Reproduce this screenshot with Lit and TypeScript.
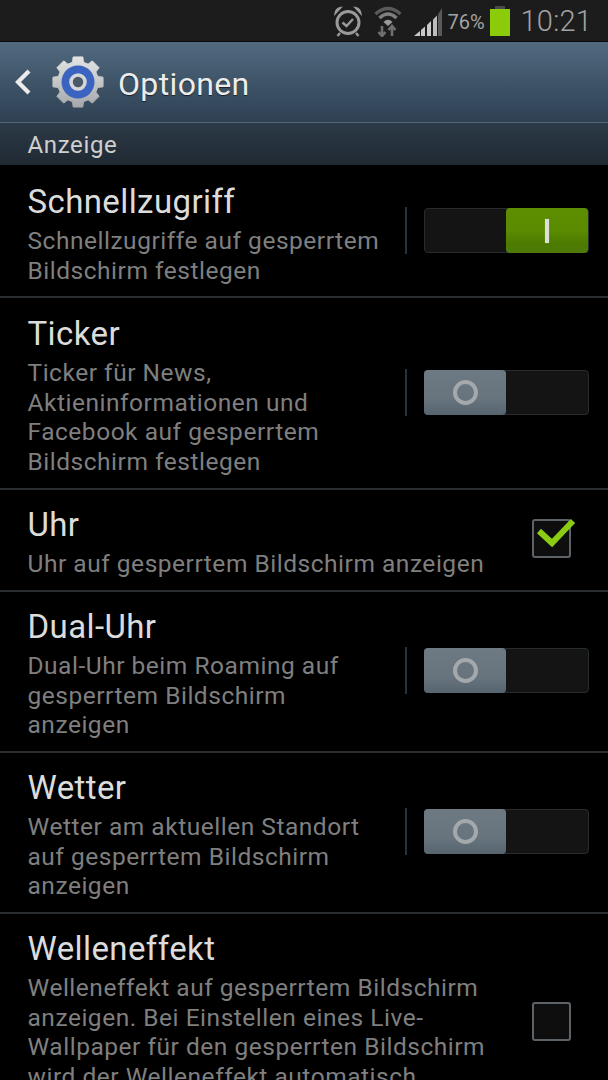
import { LitElement, html, css, svg } from "lit";
import { customElement } from "lit/decorators.js";

type Row = { title: string; lines: string[]; ctl: "on" | "off" | "checked" | "unchecked"; height: number; top: number; lift: number };

const rows: Row[] = [
  { title: "Schnellzugriff", lines: ["Schnellzugriffe auf gesperrtem", "Bildschirm festlegen"], ctl: "on", height: 133, top: 17, lift: 0 },
  { title: "Ticker", lines: ["Ticker für News,", "Aktieninformationen und", "Facebook auf gesperrtem", "Bildschirm festlegen"], ctl: "off", height: 192, top: 16, lift: 1 },
  { title: "Uhr", lines: ["Uhr auf gesperrtem Bildschirm anzeigen"], ctl: "checked", height: 102, top: 15, lift: 3 },
  { title: "Dual-Uhr", lines: ["Dual-Uhr beim Roaming auf", "gesperrtem Bildschirm", "anzeigen"], ctl: "off", height: 161, top: 15, lift: 3 },
  { title: "Wetter", lines: ["Wetter am aktuellen Standort", "auf gesperrtem Bildschirm", "anzeigen"], ctl: "off", height: 161, top: 15, lift: 3 },
  { title: "Welleneffekt", lines: ["Welleneffekt auf gesperrtem Bildschirm", "anzeigen. Bei Einstellen eines Live-", "Wallpaper für den gesperrten Bildschirm", "wird der Welleneffekt automatisch", "deaktiviert."], ctl: "unchecked", height: 220, top: 15, lift: 3 },
];

const gearPath = (() => {
  const teeth = 8, cx = 26, cy = 26, ro = 25.5, ri = 20.5;
  let d = "";
  for (let i = 0; i < teeth; i++) {
    const a = (i / teeth) * Math.PI * 2 - Math.PI / 2;
    const w = 0.19, g = 0.27;
    const pts: [number, number][] = [
      [ri, a - g], [ro, a - w], [ro, a + w], [ri, a + g],
    ];
    for (const [r, t] of pts) {
      d += `${d ? "L" : "M"}${(cx + r * Math.cos(t)).toFixed(2)} ${(cy + r * Math.sin(t)).toFixed(2)}`;
    }
  }
  return d + "Z";
})();

@customElement("app-root")
export class AppRoot extends LitElement {
  static styles = css`
    :host {
      display: block;
      width: 608px;
      height: 1080px;
      overflow: hidden;
      background: #000;
      font-family: Roboto, "Liberation Sans", sans-serif;
    }
    .status {
      height: 42px;
      background: #1c1c1c;
      display: flex;
      align-items: center;
      justify-content: flex-end;
      box-shadow: inset 0 -1px 0 #0c0c0c;
    }
    .status svg { display: block; flex: none; }
    .alarm { margin-right: 11px; }
    .wifi { margin-right: 12px; }
    .signal { margin-right: 6px; }
    .pct { font-size: 20px; color: #a3a3a3; width: 42px; white-space: nowrap; margin-top: 1px; }
    .batt { margin-right: 11px; }
    .clock { font-size: 29px; color: #a3a3a3; margin-right: 16px; font-weight: 300; letter-spacing: 0.2px; }
    .bar {
      height: 81px;
      box-sizing: border-box;
      background: linear-gradient(#516a80 0%, #3f5468 50%, #2f4153 100%);
      border-bottom: 1px solid #4d677c;
      display: flex;
      align-items: center;
    }
    .back { margin-left: 13px; flex: none; }
    .gear { margin-left: 19px; flex: none; }
    .bar-title {
      margin-left: 14px;
      font-size: 32px;
      color: #ececec;
      letter-spacing: 0.35px;
      text-shadow: 0 1px 1px rgba(0,0,0,.6);
      margin-top: 3px;
    }
    .section {
      height: 42px;
      box-sizing: border-box;
      padding-left: 27.5px;
      background: linear-gradient(#2c3a47, #1f2932);
      color: #cfcfcf;
      font-size: 24px;
      letter-spacing: 0.65px;
      line-height: 44px;
    }
    .row {
      display: flex;
      align-items: center;
      box-sizing: border-box;
      padding-left: 27.5px;
      border-bottom: 2px solid #2a2e30;
    }
    .text { flex: 1; min-width: 0; align-self: flex-start; }
    .title {
      font-size: 33px;
      line-height: 40px;
      color: #dcdcdc;
      letter-spacing: 0.4px;
    }
    .sub {
      font-size: 24.5px;
      line-height: 29.6px;
      color: #7f7f7f;
      letter-spacing: 0.52px;
      white-space: nowrap;
      margin-top: 4px;
    }
    .switch-wrap { display: flex; align-items: center; flex: none; margin-right: 19px; }
    .divider { width: 2px; height: 47px; background: #25333d; margin-right: 17px; }
    .switch {
      width: 165px;
      height: 45px;
      box-sizing: border-box;
      background: #141414;
      border: 1px solid #272c30;
      border-radius: 4px;
      position: relative;
    }
    .knob {
      position: absolute;
      top: -1px;
      bottom: -1px;
      width: 82px;
      border-radius: 4px;
      display: flex;
      align-items: center;
      justify-content: center;
    }
    .switch.on .knob {
      right: 0;
      background: linear-gradient(#5d8d00 0%, #5b8b00 50%, #4b7a00 80%, #4f7b0b 100%);
    }
    .switch.off .knob {
      left: -1px;
      background: linear-gradient(#6d7a84 0%, #67747e 65%, #56646f 100%);
    }
    .bar-i { width: 4px; height: 24px; background: #dedede; box-shadow: 0 0 1px #a5d34a; }
    .ring { width: 25px; height: 25px; box-sizing: border-box; border-radius: 50%; border: 4px solid #a4a9ac; }
    .check-wrap { flex: none; width: 39px; height: 39px; margin-right: 37px; position: relative; }
    .box { width: 39px; height: 39px; box-sizing: border-box; border: 2px solid #5d6469; border-radius: 3px; background: #0e0e0e; }
    .tick { position: absolute; left: 0; top: 0; overflow: visible; }
  `;

  private control(r: Row) {
    if (r.ctl === "on" || r.ctl === "off") {
      return html`<div class="switch-wrap" style="margin-bottom:${r.lift}px">
        <div class="divider"></div>
        <div class="switch ${r.ctl}">
          <div class="knob">${r.ctl === "on" ? html`<div class="bar-i"></div>` : html`<div class="ring"></div>`}</div>
        </div>
      </div>`;
    }
    return html`<div class="check-wrap" style="margin-bottom:${r.lift}px">
      <div class="box"></div>
      ${r.ctl === "checked"
        ? html`<svg class="tick" width="39" height="39" viewBox="0 0 39 39">
            <path d="M7 12 L20 24 L41 2" fill="none" stroke="#8bcb14" stroke-width="6"/>
          </svg>`
        : ""}
    </div>`;
  }

  render() {
    return html`
      <div class="status">
        <svg class="alarm" width="30" height="32" viewBox="0 0 30 32" fill="none" stroke="#9a9a9a">
          <circle cx="15" cy="17.5" r="11" stroke-width="3"/>
          <path d="M9.5 17.5 L13.5 21 L20 14" stroke-width="2.4"/>
          <path d="M2 9 Q2.5 3.5 8 2.5 Z M28 9 Q27.5 3.5 22 2.5 Z" fill="#9a9a9a" stroke-width="1.4"/>
          <path d="M7 28 L4.5 31 M23 28 L25.5 31" stroke-width="2.4"/>
        </svg>
        <svg class="wifi" width="28" height="32" viewBox="0 0 28 32" fill="none">
          <path d="M1.5 9 Q14 -2 26.5 9" stroke="#5a5a5a" stroke-width="3.4"/>
          <path d="M5.5 13 Q14 5 22.5 13" stroke="#7f7f7f" stroke-width="3.4"/>
          <path d="M9.5 17 Q14 12.5 18.5 17 L14 21 Z" fill="#9a9a9a"/>
          <path d="M8 21 V31 M4.5 27 L8 31 L11.5 27" stroke="#6f6f6f" stroke-width="2.6"/>
          <path d="M18 31 V21 M14.5 25 L18 21 L21.5 25" stroke="#6f6f6f" stroke-width="2.6"/>
        </svg>
        <svg class="signal" width="28" height="30" viewBox="0 0 28 30">
          <path d="M0 30 L6 25 V30 Z" fill="#c8c8c8"/>
          <path d="M7 24 L11 20.5 V30 H7 Z" fill="#c8c8c8"/>
          <path d="M13 19 L17 15 V30 H13 Z" fill="#c8c8c8"/>
          <path d="M19 13.5 L23 9.5 V30 H19 Z" fill="#bcbcbc"/>
          <path d="M24 8.5 L28 2 V30 H24 Z" fill="#5a5a5a"/>
        </svg>
        <span class="pct">76%</span>
        <svg class="batt" width="20" height="30" viewBox="0 0 20 30">
          <rect x="5" y="0" width="10" height="4" fill="#4a4a4a"/>
          <rect x="0" y="3" width="20" height="27" fill="#8ccb0a"/>
        </svg>
        <span class="clock">10:21</span>
      </div>
      <div class="bar">
        <svg class="back" width="20" height="28" viewBox="0 0 20 28">
          <path d="M16 3 L5 14 L16 25" fill="none" stroke="#ececec" stroke-width="4.2"/>
        </svg>
        <svg class="gear" width="52" height="52" viewBox="0 0 52 52">
          <defs>
            <linearGradient id="g" x1="0" y1="0" x2="0" y2="1">
              <stop offset="0" stop-color="#e4e4e4"/><stop offset="1" stop-color="#a5a8ab"/>
            </linearGradient>
          </defs>
          ${svg`<path d=${gearPath} fill="url(#g)" stroke="url(#g)" stroke-width="1" stroke-linejoin="round"/>`}
          <circle cx="26" cy="26" r="16.5" fill="#3a64c0"/>
          <circle cx="26" cy="26" r="7" fill="#4a5a6a" stroke="#d4d6d8" stroke-width="3.6"/>
        </svg>
        <span class="bar-title">Optionen</span>
      </div>
      <div class="section">Anzeige</div>
      ${rows.map(
        (r) => html`<div class="row" style="height:${r.height}px">
          <div class="text" style="padding-top:${r.top}px">
            <div class="title">${r.title}</div>
            <div class="sub">${r.lines.map((l) => html`<div>${l}</div>`)}</div>
          </div>
          ${this.control(r)}
        </div>`
      )}
    `;
  }
}
